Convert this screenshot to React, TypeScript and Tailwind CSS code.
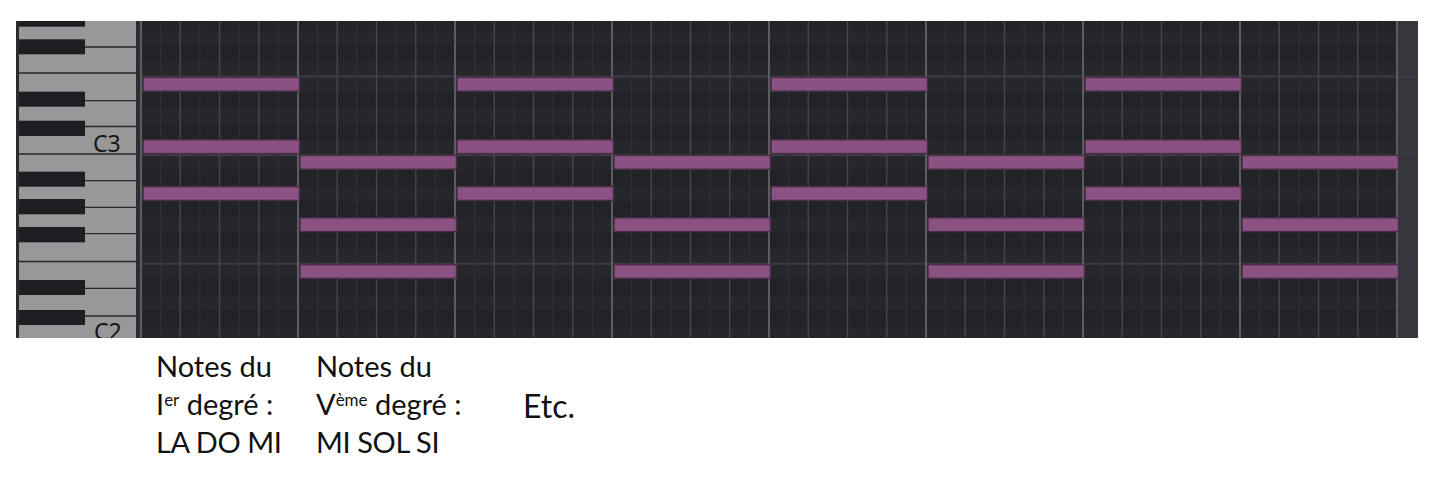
import React from "react";

// piano roll geometry, in page pixels
const GRID_X = 141;
const STEP = 19.625;
const BAR = STEP * 8;
const ROW = 15.6;
const C3_TOP = 139;

const rowTop = (n: number) => C3_TOP - n * ROW;
const isBlack = (n: number) => [1, 3, 6, 8, 10].includes(((n % 12) + 12) % 12);

// black keys on the keyboard (not aligned on grid rows, like a real piano)
const blackKeys: [number, number][] = [
  [10, 26.7],
  [39.3, 54.3],
  [91.7, 106.7],
  [120.7, 136],
  [171.7, 186.7],
  [199, 214.3],
  [227, 242.3],
  [280, 295],
  [310, 325],
];
const keyLines = [47, 100.7, 126.5, 180.7, 207.3, 233.6, 288.3, 316];
const octaveLines = [73, 154, 261.5];

// chord I: E3 C3 A2 / chord V: B2 G2 E2
const chordI = [4, 0, -3];
const chordV = [-1, -5, -8];

function PianoRoll() {
  const rows = [];
  for (let n = 8; n >= -12; n--) rows.push(n);
  const vlines = [];
  for (let i = 0; i <= 64; i++) vlines.push(i);

  return (
    <svg width={1402} height={317} viewBox="16 21 1402 317" className="block">
      {/* keyboard */}
      <rect x={16} y={21} width={3} height={317} fill="#2a2b2e" />
      <rect x={19} y={21} width={117} height={317} fill="#989898" />
      {keyLines.map((y) => (
        <line key={y} x1={85} x2={136} y1={y} y2={y} stroke="#26272a" strokeWidth={1.3} />
      ))}
      {octaveLines.map((y) => (
        <line key={y} x1={19} x2={136} y1={y} y2={y} stroke="#26272a" strokeWidth={1.6} />
      ))}
      {blackKeys.map(([a, b]) => (
        <rect key={a} x={19} y={a} width={66} height={b - a} fill="#1d1e21" />
      ))}
      <text x={93} y={151.6} fontSize={23} fill="#161616" fontFamily="'Noto Sans', sans-serif">
        C3
      </text>
      <text x={94} y={340} fontSize={23} fill="#161616" fontFamily="'Noto Sans', sans-serif">
        C2
      </text>
      <rect x={136} y={21} width={5} height={317} fill="#2c2d30" />

      {/* grid rows */}
      <rect x={GRID_X} y={21} width={BAR * 8} height={317} fill="#232528" />
      {rows.map((n) => (
        <rect
          key={n}
          x={GRID_X}
          y={rowTop(n) + 0.5}
          width={BAR * 8}
          height={ROW - 1}
          fill={isBlack(n) ? "#212326" : "#25272a"}
        />
      ))}
      {/* side strip */}
      <rect x={1397} y={21} width={21} height={317} fill="#36373a" />
      {[rowTop(4), rowTop(-1) + 0.6, rowTop(-8)].map((y) => (
        <line key={y} x1={GRID_X} x2={1418} y1={y} y2={y} stroke="#3b3e41" strokeWidth={2} />
      ))}
      {vlines.map((i) => {
        const x = GRID_X + i * STEP;
        const bar = i % 8 === 0;
        const beat = i % 2 === 0;
        return (
          <line
            key={i}
            x1={x}
            x2={x}
            y1={21}
            y2={338}
            stroke={bar ? "#5b5e61" : beat ? "#45484b" : "#303336"}
            strokeWidth={bar ? 2 : beat ? 1.4 : 1.2}
          />
        );
      })}

      {/* notes */}
      {Array.from({ length: 8 }).map((_, b) =>
        (b % 2 === 0 ? chordI : chordV).map((n) => (
          <rect
            key={`${b}-${n}`}
            x={GRID_X + b * BAR + 2}
            y={rowTop(n) + 0.8}
            width={BAR - 0.5}
            height={13.8}
            fill="#8a5283"
            stroke="#4a2e46"
            strokeWidth={1.5}
          />
        ))
      )}
    </svg>
  );
}

export default function App() {
  return (
    <div className="h-[490px] w-[1450px] bg-white pl-[16px] pt-[21px] text-[#111] font-['Lato',sans-serif]">
      <PianoRoll />
      <div className="mt-[9px] flex pl-[140px] text-[29px] leading-[38px]">
        <div className="w-[160px]">
          <div>Notes du</div>
          <div>
            I<sup className="relative -top-[9px] text-[17px]">er</sup> degré :
          </div>
          <div className="tracking-[-0.4px]">LA DO MI</div>
        </div>
        <div className="w-[207px]">
          <div>Notes du</div>
          <div>
            V<sup className="relative -top-[9px] text-[17px]">ème</sup> degré :
          </div>
          <div className="tracking-[-0.4px]">MI SOL SI</div>
        </div>
        <div className="flex items-center pt-[4px] text-[32px]">Etc.</div>
      </div>
    </div>
  );
}
